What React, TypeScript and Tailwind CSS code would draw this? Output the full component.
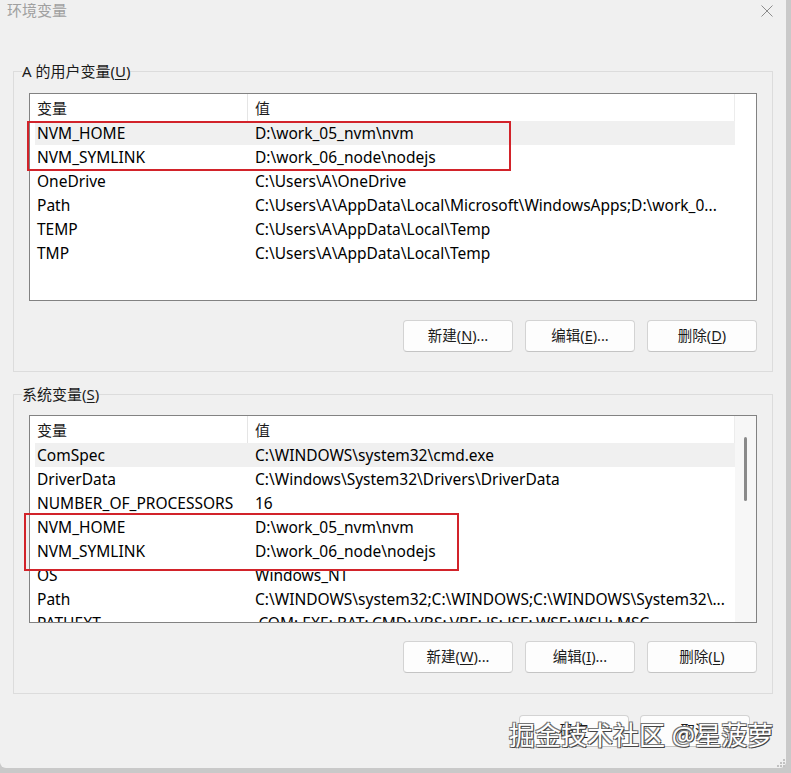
import type { ReactNode } from 'react';

type EnvVar = { name: string; value: string };

const userVars: EnvVar[] = [
  { name: 'NVM_HOME', value: 'D:\\work_05_nvm\\nvm' },
  { name: 'NVM_SYMLINK', value: 'D:\\work_06_node\\nodejs' },
  { name: 'OneDrive', value: 'C:\\Users\\A\\OneDrive' },
  { name: 'Path', value: 'C:\\Users\\A\\AppData\\Local\\Microsoft\\WindowsApps;D:\\work_0...' },
  { name: 'TEMP', value: 'C:\\Users\\A\\AppData\\Local\\Temp' },
  { name: 'TMP', value: 'C:\\Users\\A\\AppData\\Local\\Temp' },
];

const systemVars: EnvVar[] = [
  { name: 'ComSpec', value: 'C:\\WINDOWS\\system32\\cmd.exe' },
  { name: 'DriverData', value: 'C:\\Windows\\System32\\Drivers\\DriverData' },
  { name: 'NUMBER_OF_PROCESSORS', value: '16' },
  { name: 'NVM_HOME', value: 'D:\\work_05_nvm\\nvm' },
  { name: 'NVM_SYMLINK', value: 'D:\\work_06_node\\nodejs' },
  { name: 'OS', value: 'Windows_NT' },
  { name: 'Path', value: 'C:\\WINDOWS\\system32;C:\\WINDOWS;C:\\WINDOWS\\System32\\...' },
  { name: 'PATHEXT', value: '.COM;.EXE;.BAT;.CMD;.VBS;.VBE;.JS;.JSE;.WSF;.WSH;.MSC' },
];

// label with an access-key letter underlined, e.g. 新建(N)...
function Label({ text, hotkey, suffix = '' }: { text: string; hotkey: string; suffix?: string }) {
  return (
    <span>
      {text}(<span className="underline underline-offset-2">{hotkey}</span>){suffix}
    </span>
  );
}

function Button({ children }: { children: ReactNode }) {
  return (
    <button className="w-[110px] h-[32px] rounded-[4px] border border-[#d3d3d3] border-b-[#c4c4c4] bg-[#fdfdfd] text-[14.5px] text-[#1b1b1b] flex items-center justify-center">
      {children}
    </button>
  );
}

function VarList({ rows, scroll, children }: { rows: EnvVar[]; scroll?: boolean; children?: ReactNode }) {
  return (
    <div className="relative h-[208px] border border-[#828282] bg-white flex">
      <div className="flex-1 flex flex-col overflow-hidden">
        <div className="h-[27px] w-[705px] shrink-0 flex items-center text-[15px] border-r border-[#ececec]">
          <div className="w-[218px] h-full pl-[7px] pt-[2px] flex items-center border-r border-[#e5e5e5]">变量</div>
          <div className="pl-[7px] pt-[2px]">值</div>
        </div>
        {rows.map((r, i) => (
          <div
            key={r.name}
            className={`h-[24px] w-[700px] ml-[5px] pt-[2px] shrink-0 flex items-center text-[15.5px] text-black whitespace-nowrap ${i === 0 ? 'bg-[#f0f0f0]' : ''}`}
          >
            <div className="w-[218px] pl-[2px]">{r.name}</div>
            <div className="pl-[2px]">{r.value}</div>
          </div>
        ))}
      </div>
      {scroll && (
        <div className="w-[21px] bg-[#f7f7f7] flex justify-center pt-[21px]">
          <div className="w-[3px] h-[64px] rounded-full bg-[#8a8a8a]" />
        </div>
      )}
      {children}
    </div>
  );
}

export default function App() {
  return (
    <div className="w-[791px] h-[773px] bg-[#c9c9c9] overflow-hidden" style={{ fontFamily: '"Noto Sans", "Noto Sans CJK SC", sans-serif' }}>
      <div className="relative w-[786px] h-[768px] bg-[#f0f0f0] rounded-b-[6px] flex flex-col text-[#1b1b1b]">
        {/* title bar */}
        <div className="h-[20px] flex items-center justify-between pl-[7px] pr-[13px]">
          <span className="text-[15px] text-[#a0a0a0]">环境变量</span>
          <svg width="12" height="12" viewBox="0 0 12 12" className="mt-[2px]">
            <path d="M0.5 0.5 L11.5 11.5 M11.5 0.5 L0.5 11.5" stroke="#8c8c8c" strokeWidth="1" fill="none" />
          </svg>
        </div>

        <fieldset className="mt-[41px] mx-[13px] border border-[#dcdcdc] px-[15px] pb-[19px]">
          <legend className="-ml-[7px] text-[15px] leading-[20px]">
            A 的用户变量(<span className="underline underline-offset-2">U</span>)
          </legend>
          <div className="mt-[12px]">
            <VarList rows={userVars}>
              <div className="absolute left-[-3px] top-[27px] w-[484px] h-[50px] border-2 border-[#d2232a]" />
            </VarList>
          </div>
          <div className="mt-[19px] flex justify-end gap-[12px]">
            <Button><Label text="新建" hotkey="N" suffix="..." /></Button>
            <Button><Label text="编辑" hotkey="E" suffix="..." /></Button>
            <Button><Label text="删除" hotkey="D" /></Button>
          </div>
        </fieldset>

        <fieldset className="mt-[12px] mx-[13px] border border-[#dcdcdc] px-[15px] pb-[20px]">
          <legend className="-ml-[7px] text-[15px] leading-[20px]">
            系统变量(<span className="underline underline-offset-2">S</span>)
          </legend>
          <div className="mt-[11px]">
            <VarList rows={systemVars} scroll>
              <div className="absolute left-[-6px] top-[97px] w-[435px] h-[58px] border-2 border-[#d2232a]" />
            </VarList>
          </div>
          <div className="mt-[18px] flex justify-end gap-[12px]">
            <Button><Label text="新建" hotkey="W" suffix="..." /></Button>
            <Button><Label text="编辑" hotkey="I" suffix="..." /></Button>
            <Button><Label text="删除" hotkey="L" /></Button>
          </div>
        </fieldset>

        <div className="mt-[21px] pr-[36px] flex justify-end gap-[11px]">
          <Button>确定</Button>
          <Button>取消</Button>
        </div>

        {/* resize grip */}
        <svg width="10" height="10" viewBox="0 0 10 10" className="absolute right-[1px] bottom-[1px]">
          {[[8, 0], [8, 3], [5, 3], [8, 6], [5, 6], [2, 6]].map(([x, y]) => (
            <rect key={`${x}-${y}`} x={x} y={y + 2} width="2" height="2" fill="#c2c2c2" />
          ))}
        </svg>

        {/* site watermark */}
        <div className="absolute left-[509px] top-[718px] text-[26px] leading-[34px] text-white whitespace-nowrap [text-shadow:1px_1px_0_#444,-1px_-1px_0_#777,1px_-1px_0_#777,-1px_1px_0_#777]">
          掘金技术社区 @星菠萝
        </div>
      </div>
    </div>
  );
}
